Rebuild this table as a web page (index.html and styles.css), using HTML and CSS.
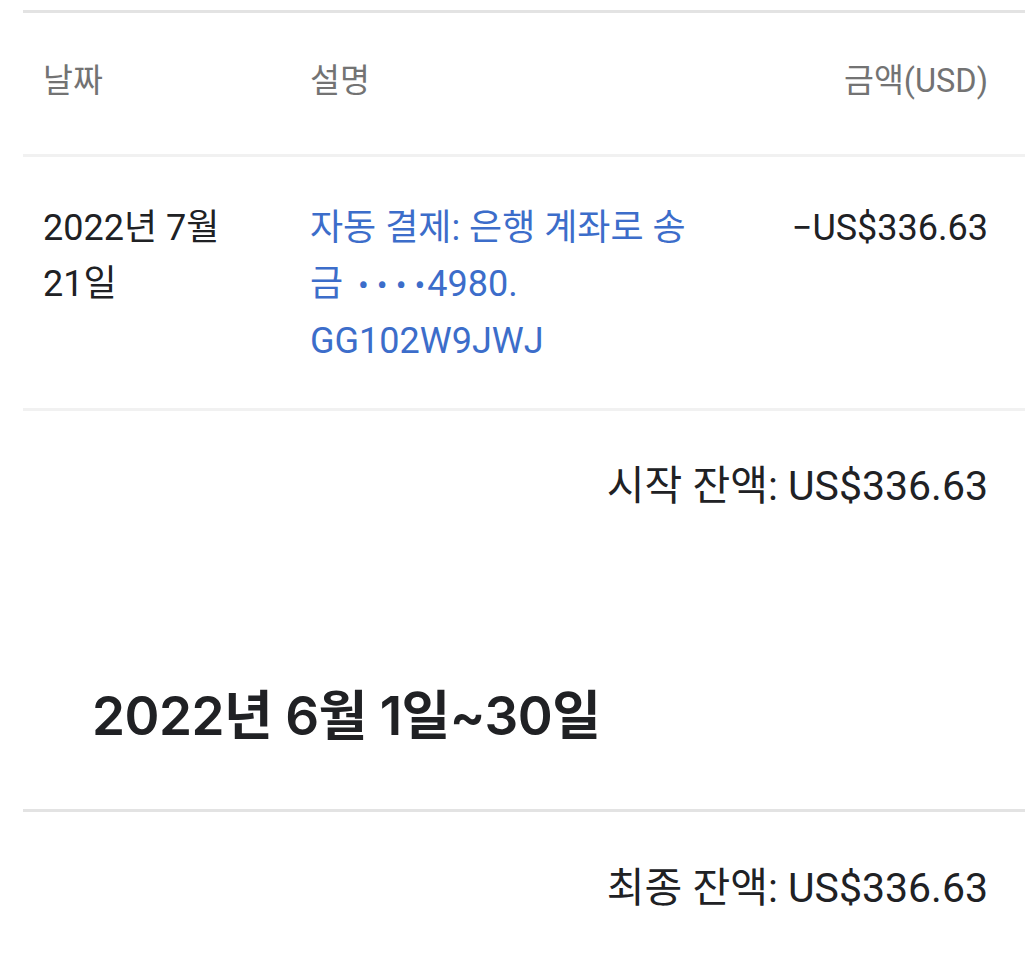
FILE: index.html
```html
<!DOCTYPE html>
<html lang="ko">
<head>
<meta charset="utf-8">
<link rel="stylesheet" href="styles.css">
</head>
<body>
<div class="page">
  <div class="table">
    <div class="row head">
      <div class="c-date">날짜</div>
      <div class="c-desc">설명</div>
      <div class="c-amt">금액(USD)</div>
    </div>
    <div class="row item">
      <div class="c-date">2022년 7월 21일</div>
      <div class="c-desc"><a class="link" href="#">자동 결제: 은행 계좌로 송금 <span class="dots">•••</span><span class="dot">•</span>4980. GG102W9JWJ</a></div>
      <div class="c-amt">−US$336.63</div>
    </div>
  </div>
  <div class="balance start">시작 잔액: US$336.63</div>
  <h2 class="period">2022년 6월 1일~30일</h2>
  <div class="balance end">최종 잔액: US$336.63</div>
</div>
</body>
</html>
```

FILE: styles.css
```css
html, body {
  margin: 0;
  padding: 0;
  background: #ffffff;
}
body {
  font-family: Roboto, "Noto Sans CJK KR", sans-serif;
  color: #202124;
  font-size: 41px;
}
.page {
  padding-top: 10px;
  margin-left: 23px;
}
.table {
  border-top: 3px solid #e3e3e3;
}
.row {
  display: grid;
  grid-template-columns: 200px 395px 1fr;
  column-gap: 67px;
  padding: 0 37px 0 20px;
}
.head {
  font-size: 32.5px;
  line-height: 56px;
  padding-top: 40px;
  padding-bottom: 45px;
  color: #737373;
  border-bottom: 3px solid #f1f1f1;
}
.item {
  font-size: 36px;
  line-height: 56px;
  padding-top: 43px;
  padding-bottom: 39px;
  border-bottom: 3px solid #f1f1f1;
}
.c-amt {
  text-align: right;
}
.link {
  color: #3c6dca;
  text-decoration: none;
}
.dots {
  padding-left: 6px;
  letter-spacing: 8px;
  font-size: 32px;
}
.dot {
  font-size: 32px;
  padding-right: 2px;
}
.balance {
  text-align: right;
  padding-right: 37px;
  line-height: 56px;
}
.start {
  padding-top: 47px;
  padding-bottom: 172px;
}
.period {
  margin: 0;
  padding-left: 69px;
  font-family: Inter, "Noto Sans CJK KR", sans-serif;
  font-weight: 600;
  font-size: 53px;
  line-height: 60px;
  padding-bottom: 63px;
  border-bottom: 3px solid #e3e3e3;
  letter-spacing: -0.5px;
}
.end {
  padding-top: 48px;
}
```
